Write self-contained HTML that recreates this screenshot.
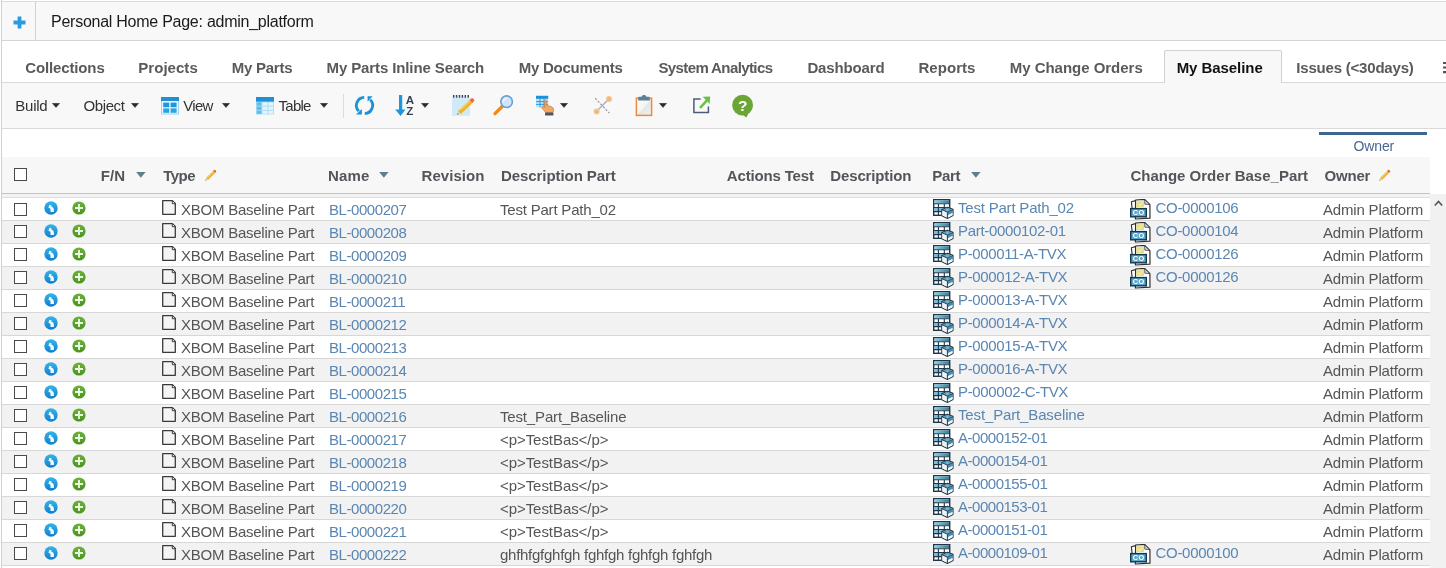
<!DOCTYPE html>
<html><head><meta charset="utf-8"><title>Personal Home Page</title>
<style>
*{box-sizing:border-box;margin:0;padding:0}
html,body{width:1446px;height:568px;overflow:hidden;background:#fff}
body{font-family:"Liberation Sans",sans-serif;position:relative;color:#555}
#wrap{position:absolute;left:0;top:0;width:1446px;height:568px;will-change:transform;opacity:0.999}
.abs{position:absolute}
#leftb{left:1px;top:0;width:1px;height:568px;background:#d0d0d0}
#topbar{left:2px;top:1px;width:1444px;height:40px;background:#f8f8f8;border-top:1px solid #dcdcdc;border-bottom:1px solid #d4d4d4}
#topsep{left:35px;top:2px;width:1px;height:38px;background:#d0d0d0}
#title{left:51px;top:13px;font-size:16px;color:#1a1a1a;white-space:nowrap;letter-spacing:-0.255px}
#tabline{left:2px;top:82px;width:1444px;height:1px;background:#d9d9d9}
.tab{position:absolute;top:59px;font-size:15px;font-weight:bold;color:#5a5a5a;white-space:nowrap}
#acttab{left:1164px;top:50px;width:118px;height:33px;background:#f8f8f8;border:1px solid #d0d0d0;border-bottom:none;border-radius:2px 2px 0 0}
#toolbar{left:2px;top:83px;width:1444px;height:46px;background:#f8f8f8;border-bottom:1px solid #d9d9d9}
.tb{position:absolute;top:97px;font-size:15px;color:#333;white-space:nowrap;letter-spacing:-0.22px}
.car{position:absolute;width:0;height:0;border-left:4px solid transparent;border-right:4px solid transparent;border-top:4.500px solid #222;top:103.500px}
#tbsep{left:343px;top:94px;width:1px;height:24px;background:#dcdcdc}
#ownbar{left:1319px;top:132px;width:108px;height:3px;background:#3f6591}
#ownlbl{left:1353.5px;top:138px;font-size:14px;color:#4a678f;white-space:nowrap;letter-spacing:-0.120px}
#hdr{left:2px;top:157px;width:1428px;height:36px;background:#f7f7f7}
#hdrline1{left:2px;top:193px;width:1428px;height:1px;background:#c4c4c4}
#hdrgap{left:2px;top:194px;width:1428px;height:3px;background:#f3f3f3}
#hdrline2{left:2px;top:197px;width:1428px;height:1px;background:#dedede}
.h{position:absolute;top:167px;font-size:15px;font-weight:bold;color:#53555a;white-space:nowrap;}
.hcar{position:absolute;width:0;height:0;border-left:4.600px solid transparent;border-right:4.600px solid transparent;border-top:5.600px solid #64839a;top:172.300px;margin-left:0.700px}
.cb{position:absolute;left:12px;top:5px;width:13px;height:13px;border:1px solid #4a4a4a;background:#fff}
#hcb{left:14px;top:168px;width:13px;height:13px;border:1px solid #4a4a4a;background:#fff}
.row{position:absolute;left:2px;width:1428px;height:23px;border-bottom:1px solid #d7d7d7;background:#fff}
.row.alt{background:#f2f2f2}
.t{position:absolute;top:3px;font-size:15px;color:#555;white-space:nowrap;line-height:17px;letter-spacing:-0.240px}
.lk{color:#5a86b2}
.c-type{left:179px}
.c-name{left:327px;letter-spacing:-0.440px}
.c-desc{left:498px}
.c-part{left:956px;top:1px}
.c-co{left:1153.500px;top:1px;letter-spacing:-0.300px}
.c-own{left:1321px;letter-spacing:-0.180px}
.ib{position:absolute;left:42px;top:3px;width:14px;height:14px}
.ig{position:absolute;left:70px;top:3px;width:14px;height:14px}
.ipg{position:absolute;left:160px;top:2px;width:14px;height:16px}
.ipart{position:absolute;left:931px;top:1px;width:21px;height:20px}
.ico{position:absolute;left:1128px;top:1px;width:21px;height:21px}
#sb{left:1430px;top:194px;width:16px;height:374px;background:#f1f1f1}
</style></head><body>
<svg width="0" height="0" style="position:absolute">
<defs>
<linearGradient id="gph" x1="0" y1="0" x2="1" y2="0"><stop offset="0" stop-color="#8ad2e6"/><stop offset="1" stop-color="#3a7f9a"/></linearGradient>
<linearGradient id="gb" x1="0" y1="0" x2="0" y2="1"><stop offset="0" stop-color="#35b4ea"/><stop offset="1" stop-color="#0f7fd0"/></linearGradient>
<linearGradient id="gg" x1="0" y1="0" x2="0" y2="1"><stop offset="0" stop-color="#6cb33a"/><stop offset="1" stop-color="#4a9420"/></linearGradient>
<g id="i-blue"><circle cx="7" cy="7" r="6.700" fill="url(#gb)"/><path d="M4.400 6.800L5.500 3.800L7.700 4.500L7.300 5.800C9 6 9.900 7.200 9.900 8.800V11H6.500V8.600C6.500 7.800 6.200 7.400 5.700 7.300Z" fill="#f4fbff"/></g>
<g id="i-green"><circle cx="7" cy="7" r="6.6" fill="url(#gg)"/><path d="M6.100 3h1.800v3.100H11v1.800H7.900V11H6.100V7.900H3V6.100h3.100z" fill="#f2fbe8"/></g>
<g id="i-page"><path d="M0.700 0.700h9.800l2.800 2.800v10.800h-12.600z" fill="#f4f4f4" stroke="#3a3a3a" stroke-width="1.300" stroke-linejoin="round"/><path d="M10.300 0.900v2.800h2.800" fill="#fff" stroke="#3a3a3a" stroke-width="1"/></g>
<g id="i-part">
 <rect x="0.700" y="0.700" width="16" height="15.600" fill="#fff" stroke="#1f3648" stroke-width="1.400"/>
 <rect x="1.400" y="1.400" width="14.600" height="2.800" fill="url(#gph)"/>
 <rect x="1.400" y="9" width="4" height="3.200" fill="#74bee4"/><rect x="6" y="9" width="5.200" height="3.200" fill="#74bee4"/>
 <path d="M1 4.700h15.400M1 8.500h15.400M1 12.600h9M5.400 4.700v11.200M11.300 4.700v4" stroke="#1f3648" stroke-width="1.100"/>
 <path d="M8.800 10.600l5.600-2.400 5.600 2.200v6l-5.600 3-5.600-2.600z" fill="#fff" stroke="#2b3f4c" stroke-width="1.200" stroke-linejoin="round"/>
 <path d="M9.800 11l4.600-1.900 4.600 1.700-4.600 2.100z" fill="#3d89b0"/>
 <path d="M11.600 11l2.800-1.100 2.800 1-2.800 1.200z" fill="#7cc0de"/>
 <path d="M9.400 11.400l5 2.200v5.200l-5-2.400z" fill="#eef3f6"/>
 <path d="M14.400 13.600l5.200-2.400v2.800l-5.200 2.600z" fill="#3f8fb8"/>
 <path d="M14.400 16.600l5.200-2.600v2.200l-5.200 2.800z" fill="#f4f7f9"/>
 <path d="M8.800 10.600l5.600 2.600 5.600-2.600M14.400 13.200v6" fill="none" stroke="#2b3f4c" stroke-width="1"/>
</g>
<g id="i-co">
 <path d="M1.400 2.800l5-1.400v9h-4.200z" fill="#fff" stroke="#2e2e2e" stroke-width="1.100" stroke-linejoin="round"/>
 <path d="M5.600 1l9-.6 5.300 5.200.1 13.600-14.600.8z" fill="#fff" stroke="#2e2e2e" stroke-width="1.200" stroke-linejoin="round"/>
 <path d="M14.600 0.500l.2 4.700 5 .4z" fill="#c9cfdc" stroke="#2e2e2e" stroke-width="0.700" stroke-linejoin="round"/>
 <rect x="6.400" y="2.200" width="7.600" height="5.800" fill="#e6de82"/>
 <path d="M8.200 5.200l1.600 1.500 2.800-3.400" fill="none" stroke="#f4efb8" stroke-width="1.100"/>
 <rect x="0.700" y="9.600" width="15.600" height="8.200" fill="#5ba6c9" stroke="#12364f" stroke-width="1.400"/>
 <text x="8.800" y="16.400" font-family="Liberation Sans" font-weight="bold" font-size="7.400" fill="#fff" text-anchor="middle" letter-spacing="0.500">CO</text>
</g>
<g id="i-pencil">
 <path d="M1.600 13.400l1-3.400 7.800-7.800 2.400 2.400-7.800 7.800z" fill="#f2b12a"/>
 <path d="M3.400 9.600l7.400-7.400.8.800-7.400 7.400z" fill="#f8d36a"/>
 <path d="M10.400 2.200l1.100-1.100c.4-.4 1-.4 1.400 0l1 1c.4.400.4 1 0 1.400l-1.100 1.100z" fill="#ea6a2c"/>
 <path d="M1.600 13.400l.9-2.900 2 2z" fill="#f1dcb4"/>
 <path d="M1.600 13.400l.4-1.300.9.900z" fill="#444"/>
</g>
</defs></svg>

<div id="wrap">
<div id="leftb" class="abs"></div>
<div id="topbar" class="abs"></div>
<div id="topsep" class="abs"></div>
<svg class="abs" style="left:13px;top:16px" width="13" height="13" viewBox="0 0 13 13"><path d="M4.6 0.5h3.8v4.1h4.1v3.8H8.4v4.1H4.6V8.4H0.5V4.6h4.1z" fill="#2a9be0"/></svg>
<div id="title" class="abs">Personal Home Page: admin_platform</div>

<div id="tabline" class="abs"></div>
<div id="acttab" class="abs"></div>
<span class="tab" style="left:25.2px;letter-spacing:-0.13px">Collections</span>
<span class="tab" style="left:138.3px;letter-spacing:0.035px">Projects</span>
<span class="tab" style="left:231.7px;letter-spacing:-0.241px">My Parts</span>
<span class="tab" style="left:326.5px;letter-spacing:-0.11px">My Parts Inline Search</span>
<span class="tab" style="left:518.7px;letter-spacing:-0.24px">My Documents</span>
<span class="tab" style="left:658.4px;letter-spacing:-0.606px">System Analytics</span>
<span class="tab" style="left:807.4px;letter-spacing:-0.136px">Dashboard</span>
<span class="tab" style="left:918.4px;letter-spacing:0.061px">Reports</span>
<span class="tab" style="left:1009.7px;letter-spacing:-0.022px">My Change Orders</span>
<span class="tab" style="left:1176.7px;letter-spacing:-0.066px;color:#111">My Baseline</span>
<span class="tab" style="left:1296.3px;letter-spacing:-0.2px">Issues (&lt;30days)</span>
<svg class="abs" style="left:1442.600px;top:61px" width="4" height="13" viewBox="0 0 4 13"><path d="M0 2h4M0 6.500h4M0 11.100h4" stroke="#555" stroke-width="2.200"/></svg>

<div id="toolbar" class="abs"></div>
<span class="tb" style="left:15.3px;letter-spacing:-0.253px">Build</span><svg class="abs" style="left:52px;top:103.300px" width="8" height="5" viewBox="0 0 8 5"><path d="M0.300 0.200h7.400L4 4.500z" fill="#2a2a2a" stroke="#2a2a2a" stroke-width="0.400" stroke-linejoin="round"/></svg>
<span class="tb" style="left:83.6px;letter-spacing:-0.417px">Object</span><svg class="abs" style="left:130.5px;top:103.300px" width="8" height="5" viewBox="0 0 8 5"><path d="M0.300 0.200h7.400L4 4.500z" fill="#2a2a2a" stroke="#2a2a2a" stroke-width="0.400" stroke-linejoin="round"/></svg>
<span class="tb" style="left:183.2px;letter-spacing:-0.67px">View</span><svg class="abs" style="left:222.4px;top:103.300px" width="8" height="5" viewBox="0 0 8 5"><path d="M0.300 0.200h7.400L4 4.500z" fill="#2a2a2a" stroke="#2a2a2a" stroke-width="0.400" stroke-linejoin="round"/></svg>
<span class="tb" style="left:278.6px;letter-spacing:-0.779px">Table</span><svg class="abs" style="left:320.3px;top:103.300px" width="8" height="5" viewBox="0 0 8 5"><path d="M0.300 0.200h7.400L4 4.500z" fill="#2a2a2a" stroke="#2a2a2a" stroke-width="0.400" stroke-linejoin="round"/></svg>
<div id="tbsep" class="abs"></div>
<!-- View icon -->
<svg class="abs" style="left:160px;top:96px" width="20" height="20" viewBox="0 0 20 20">
 <rect x="1.5" y="1.5" width="17" height="16.5" fill="#eaf6fd" stroke="#9fd3f0" stroke-width="1"/>
 <rect x="1" y="1" width="18" height="4" fill="#1f8fd6"/>
 <rect x="3.2" y="6.6" width="6" height="4.6" fill="#1d96dc"/><rect x="10.6" y="6.6" width="6" height="4.6" fill="#1d96dc"/>
 <rect x="3.2" y="12.4" width="6" height="4.4" fill="#2aa3e4"/><rect x="10.6" y="12.4" width="6" height="4.4" fill="#2aa3e4"/>
</svg>
<!-- Table icon -->
<svg class="abs" style="left:255px;top:96px" width="20" height="20" viewBox="0 0 20 20">
 <rect x="1" y="1" width="18" height="17.5" fill="#a9dcf7"/>
 <rect x="1" y="1" width="18" height="4.6" fill="#1f8fd6"/>
 <rect x="1.8" y="6.4" width="4.6" height="3.2" fill="#5bbcf0"/><rect x="7.4" y="6.4" width="5" height="3.2" fill="#e4f4fd"/><rect x="13.4" y="6.4" width="4.8" height="3.2" fill="#e4f4fd"/>
 <rect x="1.8" y="10.6" width="4.6" height="3.2" fill="#5bbcf0"/><rect x="7.4" y="10.6" width="5" height="3.2" fill="#e4f4fd"/><rect x="13.4" y="10.6" width="4.8" height="3.2" fill="#e4f4fd"/>
 <rect x="1.8" y="14.8" width="4.6" height="3" fill="#5bbcf0"/><rect x="7.4" y="14.8" width="5" height="3" fill="#e4f4fd"/><rect x="13.4" y="14.8" width="4.8" height="3" fill="#e4f4fd"/>
</svg>
<!-- Refresh -->
<svg class="abs" style="left:353px;top:94px" width="23" height="23" viewBox="0 0 23 23">
 <path d="M11.220 3.300A8.100 8.100 0 0 0 5.770 17.130" fill="none" stroke="#1a93d6" stroke-width="2.800"/>
 <path d="M11.780 19.500A8.100 8.100 0 0 0 17.230 5.670" fill="none" stroke="#1a93d6" stroke-width="2.800"/>
 <path d="M2.950 20.450H8.900V14.950Z" fill="#1a93d6"/>
 <path d="M14.600 2.350H19.600L14.600 7.850Z" fill="#1a93d6"/>
</svg>
<!-- Sort -->
<svg class="abs" style="left:394px;top:94px" width="22" height="23" viewBox="0 0 22 23">
 <path d="M5 1h3.2v14.5h3.3L6.6 22 1.2 15.5H5z" fill="#1e96dc"/>
 <text x="15.8" y="10.4" font-family="Liberation Sans" font-weight="bold" font-size="11.500" fill="#36454f" text-anchor="middle">A</text>
 <text x="15.8" y="20.8" font-family="Liberation Sans" font-weight="bold" font-size="11.500" fill="#36454f" text-anchor="middle">Z</text>
</svg>
<svg class="abs" style="left:420.5px;top:103.300px" width="8" height="5" viewBox="0 0 8 5"><path d="M0.300 0.200h7.400L4 4.500z" fill="#2a2a2a" stroke="#2a2a2a" stroke-width="0.400" stroke-linejoin="round"/></svg>
<!-- Note pencil -->
<svg class="abs" style="left:451px;top:94px" width="24" height="23" viewBox="0 0 24 23">
 <rect x="1" y="3.600" width="18" height="18.200" fill="#cfeaf9"/>
 <path d="M2.700 1v2.800M5.600 1v2.800M8.500 1v2.800M11.400 1v2.800M14.300 1v2.800M17.200 1v2.800" stroke="#3f4a58" stroke-width="1.500"/>
 <path d="M6.2 20.6l1.4-4.2L18.4 6.2l3 2.8L10.4 19.4z" fill="#f5b324"/>
 <path d="M8.6 15.6L19 5.8l1 1L9.6 16.6z" fill="#f9cf5a"/>
 <path d="M18.4 6.2l1.8-1.6c.6-.5 1.3-.5 1.9 0l.8.8c.6.6.5 1.4 0 1.9l-1.600 1.700z" fill="#ef6a2e"/>
 <path d="M6.2 20.6l1.100-3.200 2.200 2.200z" fill="#f3dcae"/>
 <path d="M6.2 20.6l.5-1.500 1 1z" fill="#444"/>
</svg>
<!-- Magnifier -->
<svg class="abs" style="left:492px;top:94px" width="23" height="23" viewBox="0 0 23 23">
 <path d="M3 19.600L10.400 12.200" stroke="#f08a1c" stroke-width="3.400" stroke-linecap="round"/>
 <circle cx="14.600" cy="7.700" r="5.800" fill="#cfe6fa" stroke="#6a9fd0" stroke-width="1.600"/>
 <path d="M11.400 8.400a3.600 3.600 0 0 1 3.400-4" fill="none" stroke="#f2f9ff" stroke-width="1.200"/>
</svg>
<!-- Table + hand -->
<svg class="abs" style="left:535px;top:94px" width="21" height="23" viewBox="0 0 21 23">
 <rect x="1" y="1.800" width="12.200" height="11.600" fill="#bfe5fa"/>
 <rect x="1" y="1.800" width="12.200" height="3" fill="#1f8fd6"/>
 <path d="M1 7.600h12M1 10.400h12M5 4.800v8.600M9 4.800v8.600" stroke="#2a9be0" stroke-width="1"/>
 <path d="M9.600 7.200c0-1.400 2-1.400 2 0v4.200l3.800.9c2 .5 3.200 1.600 3.200 3.400l-.6 2.800h-7.400l-3.600-4.400c-.9-1.200.6-2.300 1.600-1.300l1 1z" fill="#f2a865" stroke="#c97a3a" stroke-width="0.700"/>
 <rect x="10" y="18.600" width="8.400" height="3" rx="0.600" fill="#4b5a66"/>
</svg>
<svg class="abs" style="left:560px;top:103.300px" width="8" height="5" viewBox="0 0 8 5"><path d="M0.300 0.200h7.400L4 4.500z" fill="#2a2a2a" stroke="#2a2a2a" stroke-width="0.400" stroke-linejoin="round"/></svg>
<!-- Cross / graph -->
<svg class="abs" style="left:592px;top:94px" width="22" height="22" viewBox="0 0 22 22">
 <path d="M3.200 4.200L17.400 19.200" stroke="#8e9bb4" stroke-width="1.200" stroke-dasharray="2.200 1.600"/>
 <path d="M4.600 17.400L16.800 5" stroke="#a3a9bd" stroke-width="1.300"/>
 <circle cx="17" cy="4.900" r="3" fill="#f3c58f"/><circle cx="4.600" cy="17.500" r="3" fill="#f3c58f"/>
 <circle cx="17" cy="4.900" r="1.600" fill="#eeb478"/><circle cx="4.600" cy="17.500" r="1.600" fill="#eeb478"/>
</svg>
<!-- Clipboard -->
<svg class="abs" style="left:634px;top:93px" width="20" height="24" viewBox="0 0 20 24">
 <defs><linearGradient id="gcp" x1="0" y1="0" x2="1" y2="1"><stop offset="0" stop-color="#ffffff"/><stop offset="0.500" stop-color="#f4f4f4"/><stop offset="0.550" stop-color="#e3e6e8"/><stop offset="1" stop-color="#f2f2f2"/></linearGradient></defs>
 <rect x="2.400" y="5.200" width="15.200" height="17.200" fill="url(#gcp)" stroke="#f08a3a" stroke-width="1.500"/>
 <path d="M4.200 7.600V5c0-.8.500-1.300 1.300-1.300h2.100c.3-1.200 1.200-1.800 2.400-1.800s2.100.6 2.400 1.800h2.100c.8 0 1.300.5 1.300 1.300v2.600z" fill="#5b8098"/>
</svg>
<svg class="abs" style="left:658.9px;top:103.300px" width="8" height="5" viewBox="0 0 8 5"><path d="M0.300 0.200h7.400L4 4.500z" fill="#2a2a2a" stroke="#2a2a2a" stroke-width="0.400" stroke-linejoin="round"/></svg>
<!-- External link -->
<svg class="abs" style="left:692px;top:95px" width="20" height="20" viewBox="0 0 20 20">
 <path d="M8.600 3.900H1.900V17.600H16.400V11.400" fill="none" stroke="#4e5b78" stroke-width="1.500"/>
 <path d="M8 13L15.600 4.600" stroke="#6cc04a" stroke-width="2.600"/>
 <path d="M10.800 1.800L18.200 1.400L17.600 9Z" fill="#6cc04a"/>
</svg>
<!-- Help -->
<svg class="abs" style="left:731px;top:94px" width="24" height="24" viewBox="0 0 24 24">
 <circle cx="11.600" cy="11.200" r="10.400" fill="#6aa535"/>
 <path d="M12.500 21.400L15.400 23.400L17.500 19.200Z" fill="#6aa535"/>
 <text x="11.700" y="16.800" font-family="Liberation Sans" font-weight="bold" font-size="15.500" fill="#fff" text-anchor="middle">?</text>
</svg>


<div id="ownbar" class="abs"></div>
<div id="ownlbl" class="abs">Owner</div>

<div id="hdr" class="abs"></div>
<div id="hdrline1" class="abs"></div>
<div id="hdrgap" class="abs"></div>
<div id="hdrline2" class="abs"></div>
<div id="hcb" class="abs"></div>
<span class="h" style="left:100.800px;letter-spacing:0.100px">F/N</span><svg class="abs" style="left:135.5px;top:172.200px" width="10" height="6" viewBox="0 0 10 6"><path d="M0.200 0.100h9.400L4.900 5.800z" fill="#5f7f8e"/></svg>
<span class="h" style="left:163.2px;letter-spacing:-0.485px">Type</span>
<span class="h" style="left:328px;letter-spacing:0.163px">Name</span><svg class="abs" style="left:378.5px;top:172.200px" width="10" height="6" viewBox="0 0 10 6"><path d="M0.200 0.100h9.400L4.900 5.800z" fill="#5f7f8e"/></svg>
<span class="h" style="left:421.6px;letter-spacing:0.035px">Revision</span>
<span class="h" style="left:500.90px;letter-spacing:-0.061px">Description Part</span>
<span class="h" style="left:726.80px;letter-spacing:-0.163px">Actions Test</span>
<span class="h" style="left:830.30px;letter-spacing:-0.145px">Description</span>
<span class="h" style="left:932.2px;letter-spacing:-0.262px">Part</span><svg class="abs" style="left:971.4px;top:172.200px" width="10" height="6" viewBox="0 0 10 6"><path d="M0.200 0.100h9.400L4.900 5.800z" fill="#5f7f8e"/></svg>
<span class="h" style="left:1130.4px;letter-spacing:0.006px">Change Order Base_Part</span>
<span class="h" style="left:1324.6px;letter-spacing:-0.235px">Owner</span>
<svg class="abs" style="left:203.500px;top:168.600px" width="13" height="13" viewBox="0 0 15 15"><use href="#i-pencil"/></svg>
<svg class="abs" style="left:1377.600px;top:168.600px" width="13" height="13" viewBox="0 0 15 15"><use href="#i-pencil"/></svg>


<div class="row" style="top:198px"><span class="cb"></span><svg class="ib" viewBox="0 0 14 14"><use href="#i-blue"/></svg><svg class="ig" viewBox="0 0 14 14"><use href="#i-green"/></svg><svg class="ipg" viewBox="0 0 14 16"><use href="#i-page"/></svg><span class="t c-type">XBOM Baseline Part</span><span class="t lk c-name">BL-0000207</span><span class="t c-desc" style="letter-spacing:-0.200px">Test Part Path_02</span><svg class="ipart" viewBox="0 0 21 20"><use href="#i-part"/></svg><span class="t lk c-part" style="letter-spacing:-0.200px">Test Part Path_02</span><svg class="ico" viewBox="0 0 21 21"><use href="#i-co"/></svg><span class="t lk c-co">CO-0000106</span><span class="t c-own">Admin Platform</span></div>
<div class="row alt" style="top:221px"><span class="cb" style="top:4px"></span><svg class="ib" viewBox="0 0 14 14"><use href="#i-blue"/></svg><svg class="ig" viewBox="0 0 14 14"><use href="#i-green"/></svg><svg class="ipg" viewBox="0 0 14 16"><use href="#i-page"/></svg><span class="t c-type">XBOM Baseline Part</span><span class="t lk c-name">BL-0000208</span><svg class="ipart" viewBox="0 0 21 20"><use href="#i-part"/></svg><span class="t lk c-part" style="letter-spacing:-0.320px">Part-0000102-01</span><svg class="ico" viewBox="0 0 21 21"><use href="#i-co"/></svg><span class="t lk c-co">CO-0000104</span><span class="t c-own">Admin Platform</span></div>
<div class="row" style="top:244px"><span class="cb" style="top:4px"></span><svg class="ib" viewBox="0 0 14 14"><use href="#i-blue"/></svg><svg class="ig" viewBox="0 0 14 14"><use href="#i-green"/></svg><svg class="ipg" viewBox="0 0 14 16"><use href="#i-page"/></svg><span class="t c-type">XBOM Baseline Part</span><span class="t lk c-name">BL-0000209</span><svg class="ipart" viewBox="0 0 21 20"><use href="#i-part"/></svg><span class="t lk c-part" style="letter-spacing:-0.360px">P-000011-A-TVX</span><svg class="ico" viewBox="0 0 21 21"><use href="#i-co"/></svg><span class="t lk c-co">CO-0000126</span><span class="t c-own">Admin Platform</span></div>
<div class="row alt" style="top:267px"><span class="cb" style="top:4px"></span><svg class="ib" viewBox="0 0 14 14"><use href="#i-blue"/></svg><svg class="ig" viewBox="0 0 14 14"><use href="#i-green"/></svg><svg class="ipg" viewBox="0 0 14 16"><use href="#i-page"/></svg><span class="t c-type">XBOM Baseline Part</span><span class="t lk c-name">BL-0000210</span><svg class="ipart" viewBox="0 0 21 20"><use href="#i-part"/></svg><span class="t lk c-part" style="letter-spacing:-0.360px">P-000012-A-TVX</span><svg class="ico" viewBox="0 0 21 21"><use href="#i-co"/></svg><span class="t lk c-co">CO-0000126</span><span class="t c-own">Admin Platform</span></div>
<div class="row" style="top:290px"><span class="cb" style="top:4px"></span><svg class="ib" viewBox="0 0 14 14"><use href="#i-blue"/></svg><svg class="ig" viewBox="0 0 14 14"><use href="#i-green"/></svg><svg class="ipg" viewBox="0 0 14 16"><use href="#i-page"/></svg><span class="t c-type">XBOM Baseline Part</span><span class="t lk c-name">BL-0000211</span><svg class="ipart" viewBox="0 0 21 20"><use href="#i-part"/></svg><span class="t lk c-part" style="letter-spacing:-0.360px">P-000013-A-TVX</span><span class="t c-own">Admin Platform</span></div>
<div class="row alt" style="top:313px"><span class="cb" style="top:4px"></span><svg class="ib" viewBox="0 0 14 14"><use href="#i-blue"/></svg><svg class="ig" viewBox="0 0 14 14"><use href="#i-green"/></svg><svg class="ipg" viewBox="0 0 14 16"><use href="#i-page"/></svg><span class="t c-type">XBOM Baseline Part</span><span class="t lk c-name">BL-0000212</span><svg class="ipart" viewBox="0 0 21 20"><use href="#i-part"/></svg><span class="t lk c-part" style="letter-spacing:-0.360px">P-000014-A-TVX</span><span class="t c-own">Admin Platform</span></div>
<div class="row" style="top:336px"><span class="cb" style="top:4px"></span><svg class="ib" viewBox="0 0 14 14"><use href="#i-blue"/></svg><svg class="ig" viewBox="0 0 14 14"><use href="#i-green"/></svg><svg class="ipg" viewBox="0 0 14 16"><use href="#i-page"/></svg><span class="t c-type">XBOM Baseline Part</span><span class="t lk c-name">BL-0000213</span><svg class="ipart" viewBox="0 0 21 20"><use href="#i-part"/></svg><span class="t lk c-part" style="letter-spacing:-0.360px">P-000015-A-TVX</span><span class="t c-own">Admin Platform</span></div>
<div class="row alt" style="top:359px"><span class="cb" style="top:4px"></span><svg class="ib" viewBox="0 0 14 14"><use href="#i-blue"/></svg><svg class="ig" viewBox="0 0 14 14"><use href="#i-green"/></svg><svg class="ipg" viewBox="0 0 14 16"><use href="#i-page"/></svg><span class="t c-type">XBOM Baseline Part</span><span class="t lk c-name">BL-0000214</span><svg class="ipart" viewBox="0 0 21 20"><use href="#i-part"/></svg><span class="t lk c-part" style="letter-spacing:-0.360px">P-000016-A-TVX</span><span class="t c-own">Admin Platform</span></div>
<div class="row" style="top:382px"><span class="cb" style="top:4px"></span><svg class="ib" viewBox="0 0 14 14"><use href="#i-blue"/></svg><svg class="ig" viewBox="0 0 14 14"><use href="#i-green"/></svg><svg class="ipg" viewBox="0 0 14 16"><use href="#i-page"/></svg><span class="t c-type">XBOM Baseline Part</span><span class="t lk c-name">BL-0000215</span><svg class="ipart" viewBox="0 0 21 20"><use href="#i-part"/></svg><span class="t lk c-part" style="letter-spacing:-0.360px">P-000002-C-TVX</span><span class="t c-own">Admin Platform</span></div>
<div class="row alt" style="top:405px"><span class="cb" style="top:4px"></span><svg class="ib" viewBox="0 0 14 14"><use href="#i-blue"/></svg><svg class="ig" viewBox="0 0 14 14"><use href="#i-green"/></svg><svg class="ipg" viewBox="0 0 14 16"><use href="#i-page"/></svg><span class="t c-type">XBOM Baseline Part</span><span class="t lk c-name">BL-0000216</span><span class="t c-desc" style="letter-spacing:-0.160px">Test_Part_Baseline</span><svg class="ipart" viewBox="0 0 21 20"><use href="#i-part"/></svg><span class="t lk c-part" style="letter-spacing:-0.140px">Test_Part_Baseline</span><span class="t c-own">Admin Platform</span></div>
<div class="row" style="top:428px"><span class="cb" style="top:4px"></span><svg class="ib" viewBox="0 0 14 14"><use href="#i-blue"/></svg><svg class="ig" viewBox="0 0 14 14"><use href="#i-green"/></svg><svg class="ipg" viewBox="0 0 14 16"><use href="#i-page"/></svg><span class="t c-type">XBOM Baseline Part</span><span class="t lk c-name">BL-0000217</span><span class="t c-desc" style="letter-spacing:-0.060px">&lt;p&gt;TestBas&lt;/p&gt;</span><svg class="ipart" viewBox="0 0 21 20"><use href="#i-part"/></svg><span class="t lk c-part" style="letter-spacing:-0.480px">A-0000152-01</span><span class="t c-own">Admin Platform</span></div>
<div class="row alt" style="top:451px"><span class="cb" style="top:4px"></span><svg class="ib" viewBox="0 0 14 14"><use href="#i-blue"/></svg><svg class="ig" viewBox="0 0 14 14"><use href="#i-green"/></svg><svg class="ipg" viewBox="0 0 14 16"><use href="#i-page"/></svg><span class="t c-type">XBOM Baseline Part</span><span class="t lk c-name">BL-0000218</span><span class="t c-desc" style="letter-spacing:-0.060px">&lt;p&gt;TestBas&lt;/p&gt;</span><svg class="ipart" viewBox="0 0 21 20"><use href="#i-part"/></svg><span class="t lk c-part" style="letter-spacing:-0.480px">A-0000154-01</span><span class="t c-own">Admin Platform</span></div>
<div class="row" style="top:474px"><span class="cb" style="top:4px"></span><svg class="ib" viewBox="0 0 14 14"><use href="#i-blue"/></svg><svg class="ig" viewBox="0 0 14 14"><use href="#i-green"/></svg><svg class="ipg" viewBox="0 0 14 16"><use href="#i-page"/></svg><span class="t c-type">XBOM Baseline Part</span><span class="t lk c-name">BL-0000219</span><span class="t c-desc" style="letter-spacing:-0.060px">&lt;p&gt;TestBas&lt;/p&gt;</span><svg class="ipart" viewBox="0 0 21 20"><use href="#i-part"/></svg><span class="t lk c-part" style="letter-spacing:-0.480px">A-0000155-01</span><span class="t c-own">Admin Platform</span></div>
<div class="row alt" style="top:497px"><span class="cb" style="top:4px"></span><svg class="ib" viewBox="0 0 14 14"><use href="#i-blue"/></svg><svg class="ig" viewBox="0 0 14 14"><use href="#i-green"/></svg><svg class="ipg" viewBox="0 0 14 16"><use href="#i-page"/></svg><span class="t c-type">XBOM Baseline Part</span><span class="t lk c-name">BL-0000220</span><span class="t c-desc" style="letter-spacing:-0.060px">&lt;p&gt;TestBas&lt;/p&gt;</span><svg class="ipart" viewBox="0 0 21 20"><use href="#i-part"/></svg><span class="t lk c-part" style="letter-spacing:-0.480px">A-0000153-01</span><span class="t c-own">Admin Platform</span></div>
<div class="row" style="top:520px"><span class="cb" style="top:4px"></span><svg class="ib" viewBox="0 0 14 14"><use href="#i-blue"/></svg><svg class="ig" viewBox="0 0 14 14"><use href="#i-green"/></svg><svg class="ipg" viewBox="0 0 14 16"><use href="#i-page"/></svg><span class="t c-type">XBOM Baseline Part</span><span class="t lk c-name">BL-0000221</span><span class="t c-desc" style="letter-spacing:-0.060px">&lt;p&gt;TestBas&lt;/p&gt;</span><svg class="ipart" viewBox="0 0 21 20"><use href="#i-part"/></svg><span class="t lk c-part" style="letter-spacing:-0.480px">A-0000151-01</span><span class="t c-own">Admin Platform</span></div>
<div class="row alt" style="top:543px"><span class="cb" style="top:4px"></span><svg class="ib" viewBox="0 0 14 14"><use href="#i-blue"/></svg><svg class="ig" viewBox="0 0 14 14"><use href="#i-green"/></svg><svg class="ipg" viewBox="0 0 14 16"><use href="#i-page"/></svg><span class="t c-type">XBOM Baseline Part</span><span class="t lk c-name">BL-0000222</span><span class="t c-desc" style="letter-spacing:-0.270px">ghfhfgfghfgh fghfgh fghfgh fghfgh</span><svg class="ipart" viewBox="0 0 21 20"><use href="#i-part"/></svg><span class="t lk c-part" style="letter-spacing:-0.480px">A-0000109-01</span><svg class="ico" viewBox="0 0 21 21"><use href="#i-co"/></svg><span class="t lk c-co">CO-0000100</span><span class="t c-own">Admin Platform</span></div>
<div id="sb" class="abs"></div>
<svg class="abs" style="left:1433px;top:199px" width="10" height="8" viewBox="0 0 10 8"><path d="M1.800 6.600l3.700-4.200 3.700 4.200" fill="none" stroke="#505050" stroke-width="1.500"/></svg>
</div>
</body></html>
